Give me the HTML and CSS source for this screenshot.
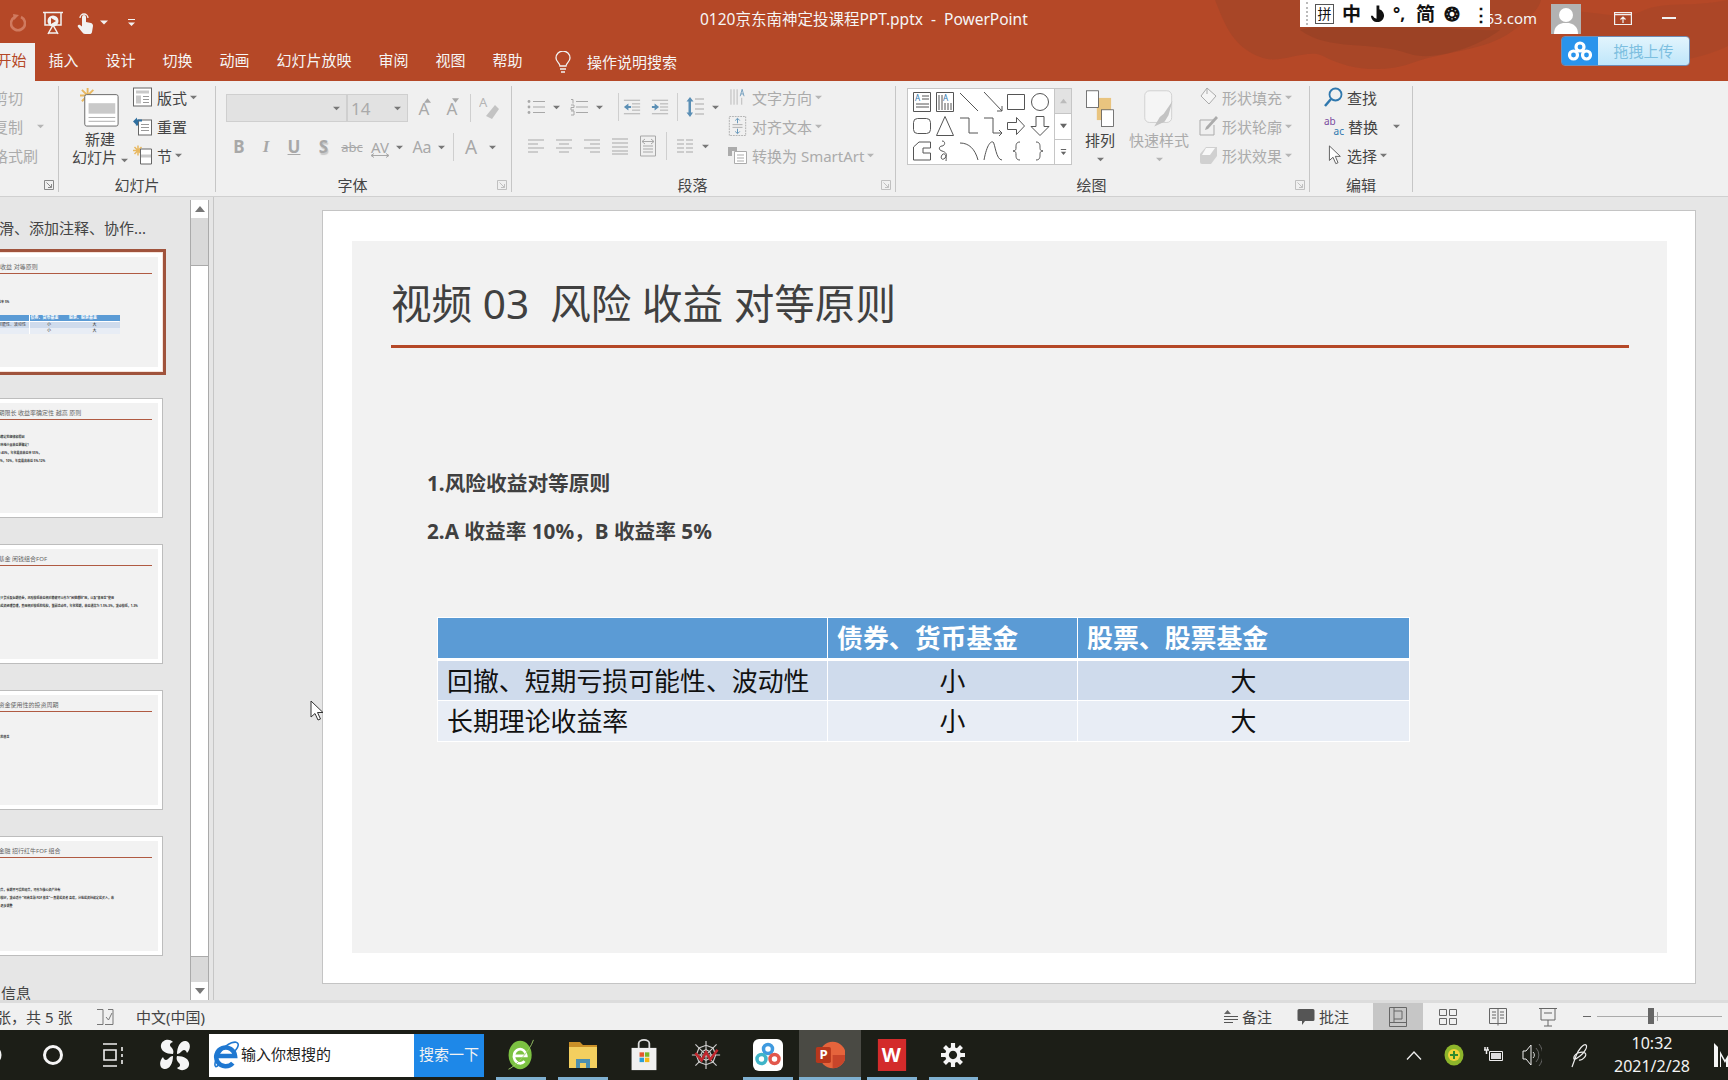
FILE: index.html
```html
<!DOCTYPE html>
<html lang="zh-CN">
<head>
<meta charset="utf-8">
<title>0120京东南神定投课程PPT.pptx - PowerPoint</title>
<link rel="stylesheet" href="styles.css">
</head>
<body>
<svg class="defs" aria-hidden="true">
  <symbol id="bul" viewBox="0 0 18 18"><g fill="none" stroke="currentColor"><path d="M6 3.500h12M6 9h12M6 14.500h12"/></g><g fill="currentColor"><circle cx="2" cy="3.500" r="1.400"/><circle cx="2" cy="9" r="1.400"/><circle cx="2" cy="14.500" r="1.400"/></g></symbol>
  <symbol id="num" viewBox="0 0 18 18"><g fill="none" stroke="currentColor"><path d="M6 3.500h12M6 9h12M6 14.500h12M1 1.500h2v4M1 7h3v2.500H1V12h3M1 13h3v4H1"/></g></symbol>
  <symbol id="outd" viewBox="0 0 20 18"><path fill="none" stroke="currentColor" d="M1 1.500h18M10 5.500h9M10 9h9M10 12.500h9M1 16.500h18"/><path fill="#5b8fb5" d="M1 9l5-4v3h3v2H6v3z"/></symbol>
  <symbol id="ind" viewBox="0 0 20 18"><path fill="none" stroke="currentColor" d="M1 1.500h18M10 5.500h9M10 9h9M10 12.500h9M1 16.500h18"/><path fill="#5b8fb5" d="M9 9L4 5v3H1v2h3v3z"/></symbol>
  <symbol id="lsp" viewBox="0 0 18 22"><path fill="none" stroke="currentColor" d="M9 3h9M9 8h9M9 13h9M9 18h9"/><path fill="#5b8fb5" d="M4 1l3.500 4.500H5v11h2L4 21 .5 16.500h2v-11H.5z"/></symbol>
  <symbol id="al" viewBox="0 0 18 18"><path fill="none" stroke="currentColor" d="M1 3h16M1 7h10M1 11h16M1 15h10"/></symbol>
  <symbol id="ac" viewBox="0 0 18 18"><path fill="none" stroke="currentColor" d="M1 3h16M4 7h10M1 11h16M4 15h10"/></symbol>
  <symbol id="ar" viewBox="0 0 18 18"><path fill="none" stroke="currentColor" d="M1 3h16M7 7h10M1 11h16M7 15h10"/></symbol>
  <symbol id="aj" viewBox="0 0 18 18"><path fill="none" stroke="currentColor" d="M1 2h16M1 6h16M1 10h16M1 14h16M1 17h16"/></symbol>
  <symbol id="ad" viewBox="0 0 18 22"><path fill="none" stroke="currentColor" d="M1.500 1h15v20h-15zM4 11h10M4 14h10M4 17h10"/><path fill="none" stroke="currentColor" d="M3 6.500h12M6 4l-3 2.500L6 9M12 4l3 2.500L12 9"/></symbol>
  <symbol id="col" viewBox="0 0 18 18"><path fill="none" stroke="currentColor" d="M1 3h7M1 7h7M1 11h7M1 15h7M10 3h7M10 7h7M10 11h7M10 15h7"/></symbol>
  <symbol id="cv" viewBox="0 0 8 5"><path fill="currentColor" d="M0 .5h8L4 4.500z"/></symbol>
  <symbol id="lau" viewBox="0 0 10 10"><path fill="none" stroke="currentColor" d="M.5.500h9v9h-9zM2.500 2.500l5 5M7.500 4v3.500H4"/></symbol>
</svg>

<div class="app">
  <header class="titlebar">
    <svg class="texture" viewBox="0 0 1728 81" preserveAspectRatio="none" aria-hidden="true">
      <path fill="#9c4327" opacity=".5" d="M1215 0c10 25 18 48 48 58 18 6 45-10 60-2 26 14 60 18 92 6 28-10 72-12 96-30 14-10 28-22 30-32z"/>
      <path fill="#8f3d24" opacity=".45" d="M1300 30c30 22 70 10 110 24 24 8 70-8 90-24-60 2-140-16-200 0z"/>
      <path fill="#a84628" opacity=".7" d="M1560 12c30-4 60 10 80 0 24-12 50-4 88-12v46c-30 14-58 18-88 12-34-6-60-16-80-46z"/>
    </svg>
    <div class="qat">
      <svg class="qi qi-undo" viewBox="0 0 16 18"><path fill="none" stroke="currentColor" stroke-width="2.600" d="M5 3a7 7 0 1 0 6 0"/><path fill="currentColor" d="M3 0l6 1-5 5z"/></svg>
      <svg class="qi qi-show" viewBox="0 0 20 24"><path fill="none" stroke="#f2f2f2" stroke-width="1.500" d="M0 1.500h20M2 2v12h16V2M10 14l-5 9M10 14l5 9M5 22h10"/><circle cx="10" cy="10" r="5.500" fill="#f2f2f2"/><path fill="#b54827" d="M8 7l5 3-5 3z"/></svg>
      <svg class="qi qi-touch" viewBox="0 0 16 24"><path fill="#f2f2f2" d="M5 6a2 2 0 0 1 4 0v5l5 1c1.500.5 2 1.500 2 3l-1 6c-.3 1.500-1 2-2.500 2H8c-1.500 0-2-1-3-2L1 16c-1-1.500.5-3 2-2l2 1.500z"/><path fill="none" stroke="#f2f2f2" stroke-width="1.300" d="M3 7a4 4 0 1 1 8 0"/></svg>
      <svg class="qi-cv" viewBox="0 0 8 5"><use href="#cv"/></svg>
      <span class="qi-more"><svg viewBox="0 0 8 10"><path fill="#f2f2f2" d="M0 1h8v1.200H0zM0 5h8L4 9z"/></svg></span>
    </div>
    <div class="doc-title">0120京东南神定投课程PPT.pptx&nbsp; -&nbsp; PowerPoint</div>
    <div class="account">
      <span class="acct-mail"><span>63.com</span></span>
      <svg class="avatar" viewBox="0 0 30 30"><rect width="30" height="30" fill="#b2b2b2"/><circle cx="15" cy="11" r="7" fill="#fff"/><path fill="#fff" d="M3 30c0-8 5-10 9-11h6c4 1 9 3 9 11z"/></svg>
      <svg class="winbtn" viewBox="0 0 18 13"><path fill="none" stroke="#f2f2f2" stroke-width="1.200" d="M.6 2.600h16.800v10H.6zM.6.600h16.800v2H.6zM9 11V5M6.500 7.500L9 5l2.500 2.500"/></svg>
      <span class="minbtn"></span>
    </div>
    <div class="ime">
      <span class="ime-box">拼</span><span class="ime-zh">中</span>
      <svg class="ime-moon" viewBox="0 0 17 17"><path d="M8 0h3v4a7 7 0 1 1-9 7h2a5 5 0 0 0 4 3z"/></svg>
      <span class="ime-punc">°,</span><span class="ime-zh">简</span><span class="ime-gear">❂</span><span class="ime-drag">⋮</span>
    </div>
    <div class="baidu">
      <span class="baidu-logo"><svg viewBox="0 0 26 20"><g fill="none" stroke="#fff" stroke-width="3.200"><circle cx="13" cy="6" r="4"/><circle cx="6.500" cy="14" r="4"/><circle cx="19.500" cy="14" r="4"/></g></svg></span>
      <span class="baidu-text">拖拽上传</span>
    </div>
    <nav class="tabs">
      <span class="tab tab-active">开始</span>
      <span class="tab tab-a">插入</span><span class="tab tab-a">设计</span><span class="tab tab-a">切换</span><span class="tab tab-a">动画</span>
      <span class="tab tab-l">幻灯片放映</span><span class="tab tab-a">审阅</span><span class="tab tab-a">视图</span><span class="tab tab-a">帮助</span>
      <svg class="bulb" viewBox="0 0 16 22"><path fill="none" stroke="#f2f2f2" stroke-width="1.300" d="M5 15c0-3-4-4-4-8a7 7 0 0 1 14 0c0 4-4 5-4 8zM5 18h6M6 21h4"/></svg>
      <span class="tell">操作说明搜索</span>
    </nav>
  </header>

  <section class="ribbon">
    <div class="group g-clip">
      <div class="stack clip-stack">
        <div class="row off"><span>剪切</span></div>
        <div class="row off"><span>复制</span><svg class="cv cv-copy"><use href="#cv"/></svg></div>
        <div class="row off"><span>格式刷</span></div>
      </div>
      <div class="glabel"><svg class="launch launch-dark"><use href="#lau"/></svg></div>
    </div>

    <div class="group g-slide">
      <div class="gbody">
        <div class="newslide">
          <svg class="ns-icon" viewBox="0 0 44 42"><g stroke="#e8b860" stroke-width="2"><path d="M9 1v16M1 9h16M3 3l12 12M15 3L3 15"/></g><rect x="6" y="8" width="35" height="33" rx="2" fill="#fff" stroke="#666"/><path fill="#c9c9c9" d="M10 17h28v11H10z"/><path stroke="#aaa" d="M10 32h28M10 36h28"/></svg>
          <span class="ns-t">新建</span>
          <span class="ns-t">幻灯片<svg class="cv cv-ns"><use href="#cv"/></svg></span>
        </div>
        <div class="stack">
          <div class="row"><svg class="r-ic" viewBox="0 0 19 19"><rect x=".5" y=".5" width="18" height="18" fill="#fff" stroke="#666"/><path fill="#c9c9c9" d="M3 3h13v3H3zM3 8h5v8H3z"/><path stroke="#999" d="M10 9h6M10 12h6M10 15h6"/></svg><span>版式</span><svg class="cv"><use href="#cv"/></svg></div>
          <div class="row"><svg class="r-ic" viewBox="0 0 19 19"><rect x="5.500" y="3.500" width="13" height="15" fill="#fff" stroke="#666"/><path stroke="#999" d="M8 8h8M8 11h8M8 14h8"/><path fill="none" stroke="#2f6f9f" stroke-width="2.200" d="M9 4H4v5"/><path fill="#2f6f9f" d="M0 5l4-4v8z"/></svg><span>重置</span></div>
          <div class="row"><svg class="r-ic" viewBox="0 0 19 19"><g stroke="#e8b860" stroke-width="1.500"><path d="M5 0v10M0 5h10M1.500 1.500l7 7M8.500 1.500l-7 7"/></g><path fill="#fff" stroke="#666" d="M7.500 3.500h11v15h-11z"/><path fill="#c9c9c9" d="M8 9h10v3H8z"/></svg><span>节</span><svg class="cv"><use href="#cv"/></svg></div>
        </div>
      </div>
      <div class="glabel">幻灯片</div>
    </div>

    <div class="group g-font">
      <div class="fbody">
        <div class="frow">
          <span class="combo combo-name"><svg class="cv"><use href="#cv"/></svg></span>
          <span class="combo combo-size"><span>14</span><svg class="cv"><use href="#cv"/></svg></span>
          <span class="fa fa-up">A<svg class="mark" viewBox="0 0 8 5"><path fill="currentColor" d="M0 5l4-5 4 5z"/></svg></span>
          <span class="fa fa-dn">A<svg class="mark" viewBox="0 0 8 5"><path fill="currentColor" d="M0 0l4 5 4-5z"/></svg></span>
          <span class="vsep vsep-a"></span>
          <svg class="eraser" viewBox="0 0 20 24"><text x="0" y="11" class="eraser-a">A</text><path fill="#c3c3c3" d="M7 20l9-11 4 4-7 10z"/></svg>
        </div>
        <div class="frow frow2">
          <span class="ft ft-b">B</span><span class="ft ft-i">I</span><span class="ft ft-u">U</span><span class="ft ft-s">S</span>
          <span class="ft ft-abc">abc</span><span class="ft ft-av">AV<svg class="av-arrow" viewBox="0 0 18 5"><path fill="none" stroke="currentColor" d="M0 2.500h18M3 .5l-3 2 3 2M15 .5l3 2-3 2"/></svg></span><svg class="cv"><use href="#cv"/></svg>
          <span class="ft ft-aa">Aa</span><svg class="cv"><use href="#cv"/></svg>
          <span class="vsep"></span>
          <span class="ft ft-ca">A</span><svg class="cv"><use href="#cv"/></svg>
        </div>
      </div>
      <div class="glabel glabel-off">字体<svg class="launch"><use href="#lau"/></svg></div>
    </div>

    <div class="group g-para">
      <div class="gbody">
        <div class="pleft">
          <div class="prow">
            <svg class="pi"><use href="#bul"/></svg><svg class="cv"><use href="#cv"/></svg>
            <svg class="pi"><use href="#num"/></svg><svg class="cv"><use href="#cv"/></svg>
            <span class="vsep vs-tight"></span>
            <svg class="pi"><use href="#outd"/></svg><svg class="pi"><use href="#ind"/></svg>
            <span class="vsep"></span>
            <svg class="pi pi-l"><use href="#lsp"/></svg><svg class="cv"><use href="#cv"/></svg>
          </div>
          <div class="prow prow2">
            <svg class="pi"><use href="#al"/></svg><svg class="pi"><use href="#ac"/></svg><svg class="pi"><use href="#ar"/></svg><svg class="pi"><use href="#aj"/></svg><svg class="pi pi-d"><use href="#ad"/></svg>
            <span class="vsep vs-wide"></span>
            <svg class="pi"><use href="#col"/></svg><svg class="cv"><use href="#cv"/></svg>
          </div>
        </div>
        <div class="stack">
          <div class="row off"><svg class="r-ic" viewBox="0 0 19 26"><path fill="none" stroke="currentColor" d="M1 3v20M5 3v20M9 3v20"/><path fill="none" stroke="#5b8fb5" d="M13 12l2.500-9 2.500 9M14 9h3"/><path stroke="currentColor" d="M15 14v9"/></svg><span>文字方向</span><svg class="cv"><use href="#cv"/></svg></div>
          <div class="row off"><svg class="r-ic" viewBox="0 0 19 22"><path fill="none" stroke="currentColor" stroke-dasharray="2 1" d="M.5.500h18v21H.500z"/><path fill="none" stroke="#5b8fb5" d="M9.500 3v5M7 5l2.500-2.500L12 5M9.500 19v-5M7 17l2.500 2.500L12 17"/><path stroke="currentColor" d="M4 9.500h11M4 12.500h11"/></svg><span>对齐文本</span><svg class="cv"><use href="#cv"/></svg></div>
          <div class="row off"><svg class="r-ic" viewBox="0 0 19 18"><path fill="currentColor" d="M0 1h9v4H4v5H0z"/><path fill="#fff" stroke="currentColor" d="M6.500 5.500h12v12h-12z"/><path stroke="currentColor" d="M9 9h7M9 12h7M9 15h7"/></svg><span>转换为 SmartArt</span><svg class="cv"><use href="#cv"/></svg></div>
        </div>
      </div>
      <div class="glabel glabel-off">段落<svg class="launch"><use href="#lau"/></svg></div>
    </div>

    <div class="group g-draw">
      <div class="gbody">
        <div class="gallery">
          <div class="shapes">
            <svg viewBox="0 0 20 22"><path fill="#fff" stroke="#555" d="M1.500 1.500h17v19h-17z"/><text x="3" y="10" class="sh-a">A</text><path stroke="#555" d="M10 5h7M10 8h7M4 13h13M4 16h13"/></svg>
            <svg viewBox="0 0 20 22"><path fill="#fff" stroke="#555" d="M1.500 1.500h17v19h-17z"/><text x="8" y="10" class="sh-a">A</text><path stroke="#555" d="M4 4v15M7 4v15M10 12v7M13 12v7M16 12v7"/></svg>
            <svg viewBox="0 0 20 22"><path stroke="#555" d="M1 2l18 18"/></svg>
            <svg viewBox="0 0 20 22"><path fill="none" stroke="#555" d="M1 1l18 19M19 20v-5M19 20h-5"/></svg>
            <svg viewBox="0 0 20 22"><path fill="#fff" stroke="#555" d="M1.500 3.500h17v15h-17z"/></svg>
            <svg viewBox="0 0 20 22"><ellipse cx="10" cy="11" rx="8.500" ry="8.500" fill="#fff" stroke="#555"/></svg>
            <svg viewBox="0 0 20 22"><rect x="1.500" y="3.500" width="17" height="15" rx="4" fill="#fff" stroke="#555"/></svg>
            <svg viewBox="0 0 20 22"><path fill="#fff" stroke="#555" d="M10 1.500l8.500 19h-17z"/></svg>
            <svg viewBox="0 0 20 22"><path fill="none" stroke="#555" d="M1 3h9v15h9"/></svg>
            <svg viewBox="0 0 20 22"><path fill="none" stroke="#555" d="M1 3h9v15h9M16 15l3 3-3 3"/></svg>
            <svg viewBox="0 0 20 22"><path fill="#fff" stroke="#555" d="M1.500 7.500h9v-5l8 8.500-8 8.500v-5h-9z"/></svg>
            <svg viewBox="0 0 20 22"><path fill="#fff" stroke="#555" d="M6 1.500h8v10h5l-9 9-9-9h5z"/></svg>
            <svg viewBox="0 0 20 22"><path fill="#fff" stroke="#555" d="M1.500 7L7 2h11.500v6H11v5h7.500v7h-17z"/></svg>
            <svg viewBox="0 0 20 22"><path fill="none" stroke="#555" d="M7 1c4 0 3 5 0 5s-4 4 0 5 6 4 3 7-5 0-3-3 5 0 4 6"/></svg>
            <svg viewBox="0 0 20 22"><path fill="none" stroke="#555" d="M1 3c9 0 15 6 18 17"/></svg>
            <svg viewBox="0 0 20 22"><path fill="none" stroke="#555" d="M1 20C4 4 8 1 10 2s3 18 9 18"/></svg>
            <svg viewBox="0 0 20 22"><path fill="none" stroke="#555" d="M14 2c-4 0-4 3-4 5s0 4-3 4c3 0 3 2 3 4s0 5 4 5"/></svg>
            <svg viewBox="0 0 20 22"><path fill="none" stroke="#555" d="M6 2c4 0 4 3 4 5s0 4 3 4c-3 0-3 2-3 4s0 5-4 5"/></svg>
          </div>
          <div class="gscroll">
            <span class="gs gs-off"><svg viewBox="0 0 8 5"><path fill="#bbb" d="M0 5l4-5 4 5z"/></svg></span>
            <span class="gs"><svg viewBox="0 0 8 5"><path fill="#666" d="M0 0l4 5 4-5z"/></svg></span>
            <span class="gs"><svg viewBox="0 0 8 9"><path fill="#666" d="M0 0h8v1.500H0zM0 4h8L4 9z"/></svg></span>
          </div>
        </div>
        <div class="bigbtn bb-arr">
          <svg class="bb-ic" viewBox="0 0 36 48"><rect x="14" y="10" width="18" height="28" fill="#e9c47f"/><rect x="1" y="1" width="15" height="21" fill="#fff" stroke="#555"/><rect x="20" y="25" width="15" height="21" fill="#fff" stroke="#555"/></svg>
          <span>排列</span><svg class="cv"><use href="#cv"/></svg>
        </div>
        <div class="bigbtn off bb-qs">
          <svg class="bb-ic" viewBox="0 0 38 48"><rect x="1" y="1" width="34" height="40" rx="6" fill="#f5f5f5" stroke="#c8c8c8"/><path fill="#c3c3c3" d="M36 14L25 30l-5 4-7 12 13-6 5-8z"/></svg>
          <span>快速样式</span><svg class="cv"><use href="#cv"/></svg>
        </div>
        <div class="stack">
          <div class="row off"><svg class="r-ic" viewBox="0 0 19 20"><path fill="#f5f5f5" stroke="currentColor" d="M8 1l9 8-7 8-8-8z"/><path stroke="currentColor" d="M8 1v6"/></svg><span>形状填充</span><svg class="cv"><use href="#cv"/></svg></div>
          <div class="row off"><svg class="r-ic" viewBox="0 0 19 20"><path fill="none" stroke="currentColor" d="M14 4H1v15h14V9"/><path fill="currentColor" d="M17 0l2 2L9 13l-3 1 1-3z"/></svg><span>形状轮廓</span><svg class="cv"><use href="#cv"/></svg></div>
          <div class="row off"><svg class="r-ic" viewBox="0 0 19 20"><path fill="#d0d0d0" d="M1 9l6-7h11v9l-6 8H3a2 2 0 0 1-2-2z"/><path fill="#f8f8f8" d="M7 3h9L11 10H3z"/></svg><span>形状效果</span><svg class="cv"><use href="#cv"/></svg></div>
        </div>
      </div>
      <div class="glabel glabel-off">绘图<svg class="launch"><use href="#lau"/></svg></div>
    </div>

    <div class="group g-edit">
      <div class="stack edit-stack">
        <div class="row"><svg class="r-ic" viewBox="0 0 19 20"><circle cx="11.500" cy="7.500" r="6" fill="none" stroke="#2f78ae" stroke-width="1.800"/><path stroke="#2f78ae" stroke-width="2.500" d="M7 12l-6 7"/></svg><span>查找</span></div>
        <div class="row"><span class="abac"><i>ab</i><b>ac</b></span><span>替换</span><svg class="cv cv-rep"><use href="#cv"/></svg></div>
        <div class="row"><svg class="r-ic" viewBox="0 0 19 22"><path fill="#fff" stroke="#555" d="M5 1v16l4-3.500 3 7 2.500-1-3-7H17z"/></svg><span>选择</span><svg class="cv"><use href="#cv"/></svg></div>
      </div>
      <div class="glabel">编辑</div>
    </div>
  </section>

  <main class="workspace">
    <aside class="pane">
      <div class="thumbs">
        <div class="section-name">滑、添加注释、协作...</div>
        <div class="thumb thumb-sel">
          <div class="t-in">
            <div class="t-title">视频 03&nbsp; 风险 收益 对等原则</div>
            <div class="t-body t-pad1">
              <div class="t-line">1.风险收益对等原则</div>
              <div class="t-line">2.A 收益率 10%，B 收益率 5%</div>
              <div class="t-table">
                <span class="tc h"></span><span class="tc h">债券、货币基金</span><span class="tc h">股票、股票基金</span>
                <span class="tc r1">回撤、短期亏损可能性、波动性</span><span class="tc r1 m">小</span><span class="tc r1 m">大</span>
                <span class="tc r2">长期理论收益率</span><span class="tc r2 m">小</span><span class="tc r2 m">大</span>
              </div>
            </div>
          </div>
        </div>
        <div class="thumb">
          <div class="t-in">
            <div class="t-title">视频 04&nbsp; 投资期限长 收益率确定性 越高 原则</div>
            <div class="t-body t-pad2">
              <div class="t-line">1.投资期限越长，收益越稳定的规律和原因</div>
              <div class="t-line">2.持有时间越长，亏损概率越小且收益更确定！</div>
              <div class="t-line">3.持有一年，亏损概率约 40%，年化最高收益率 55%，</div>
              <div class="t-line">4.持有十年，亏损概率 2%，10%，年度最高收益 5%-12%</div>
            </div>
          </div>
        </div>
        <div class="thumb">
          <div class="t-in">
            <div class="t-title">视频 05&nbsp; 短期基金 闲钱组合FOF</div>
            <div class="t-body t-pad3">
              <div class="t-line">1.短期基金组合主要投资于货币及短期债券，风险较低收益相对稳健可以作为“闲钱理财”用，以及“备用金”使用</div>
              <div class="t-line">2.组合中基金配置比例由投资经理管理，费用相对较低的结构，兼顾流动性，年化预期，收益通常为 1.5%-3%，波动较低，1-3%</div>
            </div>
          </div>
        </div>
        <div class="thumb">
          <div class="t-in">
            <div class="t-title">视频 06&nbsp; 匹配资金使用性的投资周期</div>
            <div class="t-body t-pad2">
              <div class="t-line">1.资金使用时间的规划</div>
              <div class="t-line">2.根据投资周期选择适合的基金</div>
            </div>
          </div>
        </div>
        <div class="thumb">
          <div class="t-in">
            <div class="t-title">视频 07&nbsp; 招商金融 招行红牛FOF 组合</div>
            <div class="t-body t-pad3">
              <div class="t-line">1.金融机构发行的基金组合，长期不亏损的组合，可作为核心资产持有</div>
              <div class="t-line">2.持有期 1-3 年以上收益较好，波动适中 “招商金融 FOF 基金”一直是投资者 喜欢，分批投资持续定投买入，收</div>
              <div class="t-line">3.后续调仓，持续关注，逐步调整</div>
            </div>
          </div>
        </div>
        <div class="section-name section-2">信息</div>
      </div>
      <div class="vscroll">
        <span class="vs-btn"><svg viewBox="0 0 10 6"><path fill="#777" d="M0 6l5-6 5 6z"/></svg></span>
        <span class="vs-track vs-top"></span>
        <span class="vs-thumb"></span>
        <span class="vs-track vs-bot"></span>
        <span class="vs-btn"><svg viewBox="0 0 10 6"><path fill="#777" d="M0 0l5 6 5-6z"/></svg></span>
      </div>
    </aside>

    <div class="canvas">
      <article class="slide">
        <div class="slide-in">
          <h1 class="s-title">视频 03&nbsp; 风险 收益 对等原则</h1>
          <p class="s-p s-p1">1.风险收益对等原则</p>
          <p class="s-p s-p2">2.A 收益率 10%，B 收益率 5%</p>
          <table class="s-table">
            <tr class="hd"><th></th><th>债券、货币基金</th><th>股票、股票基金</th></tr>
            <tr class="o"><td>回撤、短期亏损可能性、波动性</td><td class="mid">小</td><td class="mid">大</td></tr>
            <tr class="e"><td>长期理论收益率</td><td class="mid">小</td><td class="mid">大</td></tr>
          </table>
        </div>
      </article>
    </div>
  </main>

  <footer class="status">
    <span class="st-page">张，共 5 张</span>
    <svg class="st-notes" viewBox="0 0 18 18"><path fill="none" stroke="#777" d="M1 1.500h6v15H1M9 16.500h8v-15h-5M10 9l2.500 3L16 5"/></svg>
    <span class="st-lang">中文(中国)</span>
    <span class="st-spacer"></span>
    <svg class="st-ic" viewBox="0 0 14 14"><path fill="#666" d="M3.500 0L7 4H0z"/><path stroke="#555" d="M0 6.500h14M0 9.500h14M0 12.500h9"/></svg>
    <span class="st-txt">备注</span>
    <svg class="st-ic st-ic2" viewBox="0 0 18 18"><path fill="#555" d="M2 1h14a1.500 1.500 0 0 1 1.500 1.500v9A1.500 1.500 0 0 1 16 13H8l-3 4v-4H2A1.500 1.500 0 0 1 .5 11.500v-9A1.500 1.500 0 0 1 2 1z"/></svg>
    <span class="st-txt st-txt2">批注</span>
    <span class="view view-on"><svg viewBox="0 0 18 20"><path fill="none" stroke="#666" d="M.5.500h17v19H.500zM5 .5v15M5 4h8v8H5M.5 15.500h17"/></svg></span>
    <span class="view"><svg viewBox="0 0 18 18"><path fill="none" stroke="#666" d="M.5 1.500h7v6h-7zM10.500 1.500h7v6h-7zM.5 10.500h7v6h-7zM10.500 10.500h7v6h-7z"/></svg></span>
    <span class="view"><svg viewBox="0 0 18 20"><path fill="none" stroke="#666" d="M.5 1.500h17v15h-17zM9 1.500v17M3 5h4M3 8h4M3 11h4M11 5h4M11 8h4M11 11h4"/></svg></span>
    <span class="view"><svg viewBox="0 0 18 20"><path fill="none" stroke="#666" d="M0 1.500h18M2 2v11h14V2M9 13v6M5 19h8M5 6h8"/></svg></span>
    <span class="zoom-minus"></span>
    <span class="zoom-line"><span class="zoom-thumb"></span><span class="zoom-tick"></span></span>
  </footer>

  <footer class="taskbar">
    <span class="tb-start"><svg viewBox="0 0 24 24"><circle cx="6" cy="12" r="8" fill="none" stroke="#f5f5f5" stroke-width="3"/></svg></span>
    <span class="tb-cell tb-ring"><svg viewBox="0 0 24 24"><circle cx="12" cy="12" r="8.500" fill="none" stroke="#f5f5f5" stroke-width="3"/></svg></span>
    <span class="tb-cell tb-task"><svg viewBox="0 0 22 24"><path fill="none" stroke="#f0f0f0" stroke-width="1.600" d="M1 1h14M1 23h14M2 7h12v10H2zM20 4v4M20 11v3M20 17v4"/></svg></span>
    <span class="tb-cell tb-pin"><svg viewBox="0 0 30 32"><path fill="#f5f5f5" d="M13 15C5 15 0 11 1 6s8-7 12-3c-3 1-4 3-2 5s3 4 2 7zM17 15c0-8 4-14 9-13s5 8 1 12c-1-3-3-4-5-2s-3 3-5 3zM17 17c8 0 13 4 12 9s-8 7-12 3c3-1 4-3 2-5s-3-4-2-7zM13 17c0 8-4 14-9 13s-5-8-1-12c1 3 3 4 5 2s3-3 5-3z"/></svg></span>
    <div class="tb-search">
      <svg class="ie" viewBox="0 0 30 32"><path fill="none" stroke="#1f78d1" stroke-width="5" d="M3.500 17h21A10.500 10.500 0 1 0 22 25"/><path fill="none" stroke="#1f78d1" stroke-width="1.800" d="M6 27C1 33 0 24 8 13S27-1 28 4c.5 3-3 7-5 9"/></svg>
      <span class="tb-q">输入你想搜的</span>
      <span class="tb-go">搜索一下</span>
    </div>
    <span class="app-c run"><svg viewBox="0 0 32 36"><ellipse cx="15" cy="18" rx="13" ry="16" fill="#7cc242"/><path fill="none" stroke="#fff" stroke-width="3" d="M8 19h14a7 8 0 1 0-2 6"/><path fill="none" stroke="#9fd06b" d="M2 34C8 32 26 14 30 1"/></svg></span>
    <span class="app-c run"><svg viewBox="0 0 30 30"><path fill="#c98f28" d="M1 2h11l3 3h14v6H1z"/><path fill="#f3cf5f" d="M1 7h28v21H1z"/><path fill="#4d8fb0" d="M8 28V19h14v9h-4v-5h-6v5z"/></svg></span>
    <span class="app-c"><svg viewBox="0 0 30 36"><path fill="none" stroke="#ddd" stroke-width="2" d="M9 10V5a6 4 0 0 1 12 0v5"/><path fill="#f0f0f0" d="M1 10h28v25H1z"/><path fill="#e4572e" d="M10 15h5v5h-5z"/><path fill="#79b829" d="M16 15h5v5h-5z"/><path fill="#2a9fd8" d="M10 21h5v5h-5z"/><path fill="#f5b915" d="M16 21h5v5h-5z"/></svg></span>
    <span class="app-c"><svg viewBox="0 0 34 34"><g fill="none" stroke="#ccc" stroke-width="1.300"><path d="M17 1v32M1 17h32M5 5l24 24M29 5L5 29"/><path d="M17 6l8 3 3 8-3 8-8 3-8-3-3-8 3-8zM17 11l4 2 2 4-2 4-4 2-4-2-2-4 2-4z"/></g><path fill="none" stroke="#c0272d" stroke-width="3" d="M5 15l7 8 5-9 5 8 8-11"/></svg></span>
    <span class="app-c run"><svg viewBox="0 0 30 32"><rect width="30" height="32" rx="6" fill="#fff"/><g fill="none" stroke-width="3.500"><circle cx="15" cy="10" r="4.500" stroke="#3f9adf"/><circle cx="8.500" cy="20" r="4.500" stroke="#3fb4c8"/><circle cx="21.500" cy="20" r="4.500" stroke="#e2574c"/></g></svg></span>
    <span class="app-c run lit"><svg viewBox="0 0 34 34"><circle cx="20" cy="17" r="15" fill="#e5643c"/><path fill="#c8452a" d="M20 17h15a15 15 0 0 1-15 15z"/><rect x="1" y="8" width="17" height="18" rx="2" fill="#b7371c"/><text x="5" y="22" class="p-t">P</text></svg></span>
    <span class="app-c run"><svg viewBox="0 0 30 34"><rect width="30" height="34" fill="#d32b2b"/><text x="4" y="24" class="w-t">W</text></svg></span>
    <span class="app-c run app-gear"><svg viewBox="0 0 26 26"><path fill="none" stroke="#f5f5f5" stroke-width="4" d="M13 6.500a6.500 6.500 0 1 0 .01 0z"/><path stroke="#f5f5f5" stroke-width="4.500" d="M13 0v6M13 20v6M0 13h6M20 13h6M3.800 3.800l4.200 4.200M18 18l4.200 4.200M22.200 3.800L18 8M8 18l-4.200 4.200"/></svg></span>
    <span class="tb-spacer"></span>
    <svg class="tray tr-up" viewBox="0 0 16 9"><path fill="none" stroke="#eee" stroke-width="1.300" d="M1 8.500l7-7.500 7 7.500"/></svg>
    <svg class="tray tr-g" viewBox="0 0 20 22"><ellipse cx="10" cy="11" rx="9.500" ry="10.500" fill="#8db52b"/><circle cx="10" cy="11" r="6" fill="#f0d43a"/><path stroke="#2f8a2f" stroke-width="2" d="M10 7v8M6 11h8"/></svg>
    <svg class="tray tr-b" viewBox="0 0 20 16"><path fill="none" stroke="#eee" d="M5.500 4.500h13v9h-13z"/><path fill="#ddd" d="M7 6h10v6H7z"/><path stroke="#eee" stroke-width="1.500" d="M1 0v3M3.500 0v3M0 3h5M2.500 3v4"/></svg>
    <svg class="tray tr-v" viewBox="0 0 20 26"><path fill="none" stroke="#eee" d="M1 9h3l5-6v20l-5-6H1z"/><path fill="none" stroke="#ddd" d="M11 10a4 4 0 0 1 0 6"/><path fill="none" stroke="#666" d="M14 6a10 10 0 0 1 0 14M17 2c5 6 5 16 0 22"/></svg>
    <svg class="tray tr-p" viewBox="0 0 20 26"><path fill="none" stroke="#eee" stroke-width="1.200" d="M2 25l4-11c2-6 8-13 10-11s-2 8-6 11-7 5-6 1 8-6 11-4-3 8-6 7"/></svg>
    <div class="clock"><span>10:32</span><span>2021/2/28</span></div>
    <span class="tb-notify"><svg viewBox="0 0 14 24"><path fill="#f5f5f5" d="M0 0l4 4v20H0zM6 8l5 9 3-5v12h-2v-6l-1 2-4-7v11H6z"/></svg></span>
  </footer>

  <svg class="cursor" viewBox="0 0 14 21" aria-hidden="true"><path fill="#fff" stroke="#333" d="M1 1v16l4-3.500 3 6.500 2.500-1-3-6.500H13z"/></svg>
</div>
</body>
</html>
```
FILE: styles.css
```css
*{box-sizing:border-box}
html,body{margin:0;height:100%;overflow:hidden}
body{font-family:"Noto Sans","Noto Sans CJK SC",sans-serif;font-size:15px;color:#444;background:#e6e6e6}
.defs{position:absolute;width:0;height:0}
.app{position:relative;width:1728px;height:1080px;overflow:hidden;display:flex;flex-direction:column}

/* title bar */
.titlebar{position:relative;height:81px;flex:none;background:#b54827;color:#f5f5f5;display:flex;flex-direction:column;justify-content:flex-end}
.texture{position:absolute;inset:0;width:100%;height:100%}
.qat{position:absolute;left:0;top:1px;height:43px;display:flex;align-items:center}
.qi{display:block}
.qi-undo{width:16px;height:18px;margin-left:10px;color:#d07a5f}
.qi-show{width:20px;height:24px;margin-left:17px}
.qi-touch{width:16px;height:24px;margin-left:14px}
.qi-cv{width:8px;height:5px;margin-left:7px;color:#f2f2f2}
.qi-more{display:flex;margin-left:20px}
.qi-more svg{width:7px;height:9px}
.doc-title{position:absolute;left:700px;top:7px;line-height:24px;font-size:15.500px;white-space:nowrap}
.account{position:absolute;left:1490px;right:0;top:0;height:36px;display:flex;align-items:center}
.acct-mail{font-size:15px;width:47px;margin-right:14px;display:flex;justify-content:flex-end;overflow:hidden;margin-top:-1px;white-space:nowrap;flex:none}
.acct-mail span{flex:none}
.avatar{width:30px;height:30px;margin-top:2px}
.winbtn{width:18px;height:13px;margin-left:33px}
.minbtn{width:14px;height:1.500px;background:#f2f2f2;margin-left:30px}
.ime{position:absolute;left:1300px;top:0;width:190px;height:27px;background:#fff;color:#111;display:flex;align-items:center;padding-left:15px;font-weight:700}
.ime::before{content:"";position:absolute;left:6px;top:2px;bottom:2px;border-left:2px dotted #bbb}
.ime-box{width:20px;height:20px;border:1px solid #555;font-size:14px;line-height:18px;text-align:center;font-weight:400}
.ime-zh{font-size:19px;line-height:24px;margin-left:8px}
.ime-moon{width:17px;height:17px;margin-left:8px;fill:#111}
.ime-punc{font-size:17px;margin-left:8px;width:16px;line-height:24px}
.ime-gear{font-size:19px;margin-left:9px;line-height:24px}
.ime-drag{font-size:18px;margin-left:12px;line-height:24px}
.baidu{position:absolute;left:1561px;top:36px;width:129px;height:30px;display:flex;border:1px solid #6f8db5;border-radius:4px;overflow:hidden}
.baidu-logo{width:36px;background:#2a94ec;display:flex;align-items:center;justify-content:center}
.baidu-logo svg{width:26px;height:20px}
.baidu-text{flex:1;background:linear-gradient(#e2f4fd,#bfe6fa);color:#7dbfe0;text-align:center;line-height:28px;font-size:15px}
.tabs{position:relative;height:38px;display:flex;align-items:center}
.tab{height:38px;line-height:34px;font-size:15px;text-align:center;color:#f5f5f5;flex:none}
.tab-active{width:35px;background:#f0f0f0;color:#b54827;display:block;text-indent:-12px;overflow:hidden;white-space:nowrap;line-height:35px}
.tab-a{width:57px}
.tab-l{width:102px}
.bulb{width:16px;height:22px;margin-left:19px;flex:none}
.tell{margin-left:16px;font-size:15px;line-height:34px}

/* ribbon */
.ribbon{height:116px;flex:none;background:#f0f0f0;border-bottom:1px solid #d0d0d0;padding-top:5px;display:flex;align-items:flex-start}
.group{height:106px;border-right:1px solid #c6c6c6;display:flex;flex-direction:column;flex:none;position:relative}
.gbody{flex:1;display:flex;align-items:flex-start}
.glabel{height:22px;line-height:30px;text-align:center;font-size:15px;color:#444;position:relative;flex:none}
.glabel-off{padding-right:22px}
.launch{position:absolute;right:4px;bottom:2px;width:10px;height:10px;color:#c0c0c0}
.launch-dark{color:#888}
.stack{display:flex;flex-direction:column;gap:5px;margin-top:-1px}
.row{height:24px;display:flex;align-items:center;white-space:nowrap;font-size:15px;color:#444}
.r-ic{width:19px;height:20px;margin-right:5px;flex:none}
.off{color:#ababab}
.cv{width:7px;height:5px;margin-left:3px;flex:none;color:#777}
.off .cv{color:#b5b5b5}

.g-clip{width:59px;overflow:hidden}
.clip-stack{flex:1;margin-left:-7px}
.cv-copy{margin-left:14px}

.g-slide{width:157px}
.newslide{width:58px;margin-left:12px;display:flex;flex-direction:column;align-items:center;color:#444}
.ns-icon{width:42px;height:40px;margin-top:1px;margin-bottom:3px}
.ns-t{line-height:18px;font-size:15px;white-space:nowrap}
.cv-ns{margin-left:4px}
.g-slide .stack{margin-left:4px}

.g-font{width:296px}
.fbody{flex:1;padding:8px 0 0 10px;display:flex;flex-direction:column;gap:11px}
.frow{height:28px;display:flex;align-items:center;color:#a8a8a8}
.combo{height:28px;background:#e2e2e2;border:1px solid #cfcfcf;display:flex;align-items:center;justify-content:flex-end;padding-right:6px;flex:none}
.combo-name{width:121px}
.combo-size{width:61px;justify-content:space-between;padding-left:3px;font-size:17px;color:#aaa}
.fa{position:relative;font-size:17px;width:14px;text-align:center;color:#a8a8a8}
.mark{position:absolute;right:0;top:1px;width:7px;height:5px}
.fa-up{margin-left:9px}
.fa-dn{margin-left:14px}
.vsep{display:block;width:1px;height:28px;background:#cfcfcf;flex:none}
.vsep-a{margin-left:11px}
.eraser{width:20px;height:24px;margin-left:8px}
.eraser-a{font-size:13px;fill:#b5b5b5}
.ft{display:block;text-align:center;flex:none;font-size:17px;color:#a8a8a8;line-height:28px}
.ft-b{width:26px;font-weight:700}
.ft-i{width:28px;font-style:italic;font-family:"Liberation Serif",serif;font-weight:700}
.ft-u{width:28px;text-decoration:underline;font-weight:700}
.ft-s{width:31px;font-weight:700;text-shadow:1px 2px 1px #c8c8c8}
.ft-abc{width:26px;font-size:13px;text-decoration:line-through}
.ft-av{position:relative;width:26px;font-size:15px;margin-left:2px}
.av-arrow{position:absolute;left:4px;bottom:3px;width:18px;height:5px}
.ft-aa{width:26px;margin-left:6px;font-size:16px}
.frow2 .vsep{margin-left:8px}
.ft-ca{width:30px;font-size:19px;margin-left:2px}

.g-para{width:384px}
.pleft{width:204px;padding:7px 0 0 15px;color:#a8a8a8;flex:none}
.prow{height:28px;display:flex;align-items:center}
.prow2{margin-top:11px}
.prow .vsep{margin:0 8px}
.prow .vs-tight{margin:0 4px 0 5px}
.prow .vs-wide{margin:0 9px}
.pi{width:18px;height:18px;flex:none;color:#a8a8a8}
.prow .pi + .cv{margin:0 10px 0 8px}
.prow .pi + .pi{margin-left:10px}
.pi-l{height:22px}
.pi-d{height:22px}
.g-para .stack{margin-left:12px}

.g-draw{width:414px}
.gallery{margin:2px 0 0 11px;width:165px;height:77px;background:#fff;border:1px solid #c6c6c6;display:flex;flex:none}
.shapes{width:146px;display:grid;grid-template-columns:repeat(6,1fr);grid-template-rows:repeat(3,1fr);padding:1px 2px}
.shapes svg{width:20px;height:22px;margin:auto}
.sh-a{font-size:8px;fill:#2f78ae}
.gscroll{flex:1;border-left:1px solid #c6c6c6;display:flex;flex-direction:column}
.gs{flex:1;display:flex;align-items:center;justify-content:center;border-bottom:1px solid #c6c6c6}
.gs:last-child{border-bottom:0}
.gs-off{background:#e2e2e2}
.gs svg{width:7px;height:6px}
.bigbtn{display:flex;flex-direction:column;align-items:center;font-size:15px;line-height:20px;white-space:nowrap;flex:none}
.bb-ic{width:36px;height:38px;margin-bottom:2px}
.bigbtn .cv{margin:7px 0 0}
.bb-arr{width:44px;margin:4px 0 0 6px;color:#444}
.bb-qs{width:62px;margin:4px 0 0 6px}
.g-draw .stack{margin-left:9px}
.g-draw .r-ic{margin-right:4px}

.g-edit{width:103px}
.edit-stack{flex:1;margin-left:14px}
.edit-stack .r-ic{margin-right:4px}
.abac{width:20px;margin-right:4px;font-size:10px;line-height:10px;display:flex;flex-direction:column}
.abac i{font-style:normal;color:#7a4a9e}
.abac b{font-weight:400;color:#2f78ae;text-align:right}
.cv-rep{margin-left:15px}

/* workspace */
.workspace{flex:1;display:flex;min-height:0;background:#e6e6e6;border-bottom:3px solid #dcdcdc}
.pane{width:214px;flex:none;display:flex;border-right:1px solid #c6c6c6;padding-right:5px;overflow:hidden}
.thumbs{width:190px;flex:none;overflow:hidden;position:relative}
.section-name{font-size:15px;color:#444;line-height:22px;margin:20px 0 13px -1px;white-space:nowrap}
.section-2{margin:24px 0 0 1px}
.thumb{width:211px;height:120px;margin:0 0 26px -48px;background:#fff;border:1px solid #bdbdbd;padding:4px}
.thumb-sel{outline:3px solid #a0533c;border-color:#f6e3da}
.t-in{height:100%;background:#f2f2f2;overflow:hidden}
.t-title{height:17px;border-bottom:1px solid #b05a42;margin:0 6px;font-size:6px;line-height:20px;color:#666;white-space:nowrap;overflow:hidden}
.t-body{padding-left:11px}
.t-pad1{padding-top:18px}
.t-pad2{padding-top:13px}
.t-pad3{padding-top:28px}
.t-line{font-size:3px;line-height:8px;color:#333;font-weight:700;white-space:nowrap}
.t-pad1 .t-line{line-height:7px}
.t-table{margin:9px 0 0 1px;width:150px;display:grid;grid-template-columns:60px 38px 52px;grid-auto-rows:6px;gap:.5px;background:#fff}
.tc{font-size:4px;line-height:6px;color:#333;white-space:nowrap;overflow:hidden;padding-left:1px}
.tc.h{background:#5b9bd5;color:#fff;font-weight:700}
.tc.r1{background:#cfdbec}
.tc.r2{background:#e8edf5}
.tc.m{text-align:center}

.vscroll{width:19px;flex:none;display:flex;flex-direction:column;margin-top:3px;border-left:1px solid #aaa;border-right:1px solid #aaa;background:#dcdcdc}
.vs-btn{height:18px;background:#fff;display:flex;align-items:center;justify-content:center;flex:none}
.vs-btn svg{width:10px;height:6px}
.vs-track{background:#d9d9d9;flex:none}
.vs-top{height:47px}
.vs-thumb{height:692px;background:#fff;border-top:1px solid #aaa;border-bottom:1px solid #aaa;flex:none}
.vs-bot{height:25px}

.canvas{flex:1;padding:13px 0 0 108px;min-width:0}
.slide{width:1374px;height:774px;background:#fff;border:1px solid #c4c4c4;padding:30px 28px 30px 29px}
.slide-in{height:100%;background:#f2f2f2;padding-top:35px;overflow:hidden}
.s-title{margin:0 38px 0 39px;font-weight:400;font-size:40.600px;line-height:56px;height:72px;color:#404040;border-bottom:3px solid #b54827;white-space:nowrap}
.s-p{margin:0 0 0 75px;font-size:20.700px;line-height:28px;font-weight:700;color:#404040}
.s-p1{margin-top:121px;height:48px}
.s-p2{height:28px}
.s-table{margin:72px 0 0 85px;width:973px;height:125px;border-collapse:collapse;table-layout:fixed;font-size:25.900px;color:#111}
.s-table th,.s-table td{border:1px solid #fff;padding:0 9px;text-align:left;white-space:nowrap;line-height:38px}
.s-table th:first-child,.s-table td:first-child{width:390px}
.s-table th:nth-child(2),.s-table td:nth-child(2){width:250px}
.hd th{background:#5b9bd5;color:#fff;font-weight:700;border-bottom:3px solid #fff}
.o td{background:#cfdbec}
.e td{background:#e8edf5}
.s-table .mid{text-align:center}

/* status */
.status{height:27px;flex:none;background:#f0f0f0;display:flex;align-items:center;font-size:15px;color:#444;white-space:nowrap}
.st-page{margin-left:-4px;width:76px}
.st-notes{width:18px;height:18px;margin-left:24px}
.st-lang{margin-left:22px}
.st-spacer{flex:1}
.st-ic{width:14px;height:14px;flex:none}
.st-txt{margin-left:4px;width:31px}
.st-ic2{width:18px;height:18px;margin-left:24px}
.st-txt2{margin-left:4px;margin-right:24px;width:30px}
.view{width:50px;height:27px;display:flex;align-items:center;justify-content:center;flex:none}
.view svg{width:18px;height:20px}
.view-on{background:#c6c6c6}
.zoom-minus{width:8px;height:1.500px;background:#666;margin-left:10px;flex:none}
.zoom-line{position:relative;width:125px;height:1px;background:#aaa;margin:0 6px;flex:none}
.zoom-thumb{position:absolute;left:51px;top:-8px;width:6px;height:16px;background:#666}
.zoom-tick{position:absolute;left:60px;top:-4px;width:1px;height:9px;background:#aaa}

/* taskbar */
.taskbar{height:50px;flex:none;background:#1c1e17;display:flex;align-items:center;color:#f2f2f2}
.tb-start{width:25px;flex:none;display:flex}
.tb-start svg{width:24px;height:24px;margin-left:-14px}
.tb-cell{display:flex;align-items:center;justify-content:center;flex:none}
.tb-ring{width:56px}
.tb-ring svg{width:24px;height:24px}
.tb-task{width:56px;margin-left:4px}
.tb-task svg{width:22px;height:24px}
.tb-pin{width:56px;margin-left:6px}
.tb-pin svg{width:30px;height:32px}
.tb-search{width:275px;height:43px;margin-left:6px;background:#fff;display:flex;align-items:center;flex:none}
.ie{width:27px;height:30px;margin-left:4px}
.tb-q{margin-left:1px;color:#222;font-size:15px;flex:1;line-height:20px;margin-top:-2px}
.tb-go{width:70px;height:43px;background:#1e88e8;color:#f2f2f2;font-size:15px;line-height:40px;text-align:center}
.app-c{position:relative;width:61.800px;height:50px;display:flex;align-items:center;justify-content:center;flex:none}
.tb-search + .app-c{margin-left:6px}
.app-c svg{width:30px;height:32px}
.app-gear svg{width:24px;height:24px}
.app-c.run::after{content:"";position:absolute;left:6px;right:6px;bottom:0;height:3px;background:#7fb0d0}
.app-c.lit{background:#4a4a44}
.app-c.lit::after{left:0;right:0}
.p-t{font-size:15px;font-weight:700;fill:#fff}
.w-t{font-size:21px;font-weight:700;fill:#fff}
.tb-spacer{flex:1}
.tray{flex:none}
.tr-up{width:16px;height:9px}
.tr-g{width:20px;height:22px;margin-left:22px}
.tr-b{width:20px;height:16px;margin-left:20px}
.tr-v{width:20px;height:26px;margin-left:18px}
.tr-p{width:20px;height:26px;margin-left:28px}
.clock{width:84px;margin-left:20px;display:flex;flex-direction:column;align-items:center;font-size:16px;line-height:23px;flex:none}
.tb-notify{width:14px;height:24px;margin-left:20px;flex:none;display:flex}
.tb-notify svg{width:14px;height:24px}

.cursor{position:absolute;left:310px;top:700px;width:14px;height:21px}
```
